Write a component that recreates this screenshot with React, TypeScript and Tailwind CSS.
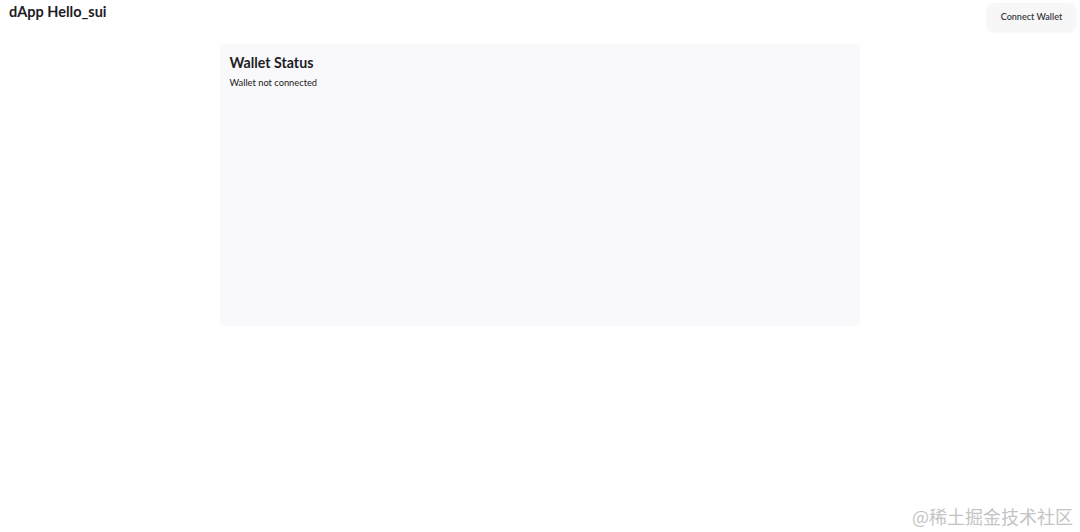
export default function App() {
  return (
    <div
      className="relative h-[532px] w-[1080px] overflow-hidden bg-white text-[#1c2024]"
      style={{ fontFamily: 'Lato, "Noto Sans", sans-serif' }}
    >
      <header className="flex items-center justify-between pl-[9px] pr-[4px] pt-[3px]">
        <h1 className="-mt-[1px] self-start text-[14.5px] font-bold leading-[20px]">dApp Hello_sui</h1>
        <button className="h-[28px] w-[89px] rounded-[8px] bg-[#f7f7f8] text-[9px] font-semibold text-[#373a40] shadow-[0_1px_3px_rgba(0,0,0,0.06)]">
          Connect Wallet
        </button>
      </header>

      <div className="flex justify-center pt-[13px]">
        <div className="-ml-[1px] h-[282px] w-[640px] rounded-[4px] bg-[#f9f9fb] px-[10px] pt-[9px]">
          <h2 className="text-[14.2px] font-bold leading-[20px]">Wallet Status</h2>
          <p className="mt-[3px] text-[9.3px] leading-[14px] text-[#202020]">Wallet not connected</p>
        </div>
      </div>

      <div
        className="absolute bottom-[4px] right-[7px] text-[18px] leading-[24px] text-[#c4c4c4]"
        style={{ fontFamily: '"Noto Sans CJK SC", sans-serif' }}
      >
        @稀土掘金技术社区
      </div>
    </div>
  );
}
